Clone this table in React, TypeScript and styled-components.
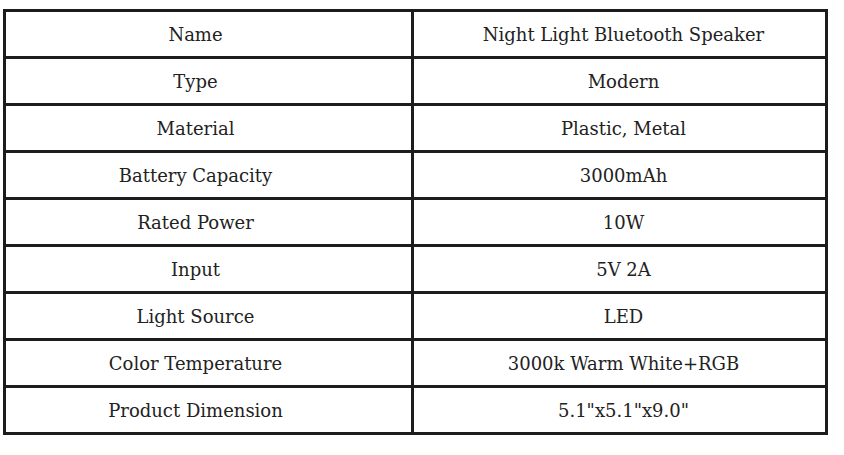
import React from 'react';
import styled, { createGlobalStyle } from 'styled-components';

const rows: [string, string][] = [
    ['Name', 'Night Light Bluetooth Speaker'],
    ['Type', 'Modern'],
    ['Material', 'Plastic, Metal'],
    ['Battery Capacity', '3000mAh'],
    ['Rated Power', '10W'],
    ['Input', '5V 2A'],
    ['Light Source', 'LED'],
    ['Color Temperature', '3000k Warm White+RGB'],
    ['Product Dimension', '5.1"x5.1"x9.0"'],
];

function App() {
    return (
        <>
        <GlobalStyle />
        <Page>
            <SpecTable>
                {rows.map(([label, value], i) => (
                    <Row key={label} last={i === rows.length - 1}>
                        <LabelCell>{label}</LabelCell>
                        <ValueCell>{value}</ValueCell>
                    </Row>
                ))}
            </SpecTable>
        </Page>
        </>
    )
}

const GlobalStyle = createGlobalStyle`
    html, body {
        margin: 0;
        padding: 0;
        background: #ffffff;
    }
`

const Page = styled.div`
    width: 844px;
    height: 455px;
    padding: 9px 0 0 3px;
    box-sizing: border-box;
    font-family: 'DejaVu Serif', serif;
    color: #222222;
`

const SpecTable = styled.div`
    width: 825px;
    border: 3px solid #1c1c1c;
    box-sizing: border-box;
    display: flex;
    flex-direction: column;
`

const Row = styled.div<{last: boolean}>`
    display: grid;
    grid-template-columns: 408px 1fr;
    height: ${props => props.last ? '44px' : '47px'};
    border-bottom: ${props => props.last ? 'none' : '3px solid #1c1c1c'};
    box-sizing: border-box;
`

const LabelCell = styled.div`
    display: flex;
    align-items: center;
    justify-content: center;
    padding-right: 26px;
    border-right: 3px solid #1c1c1c;
    font-size: 18px;
`

const ValueCell = styled.div`
    display: flex;
    align-items: center;
    justify-content: center;
    padding-left: 8px;
    font-size: 18px;
`

export default App;
